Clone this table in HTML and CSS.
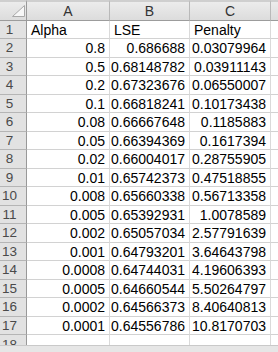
FILE: index.html
```html
<!DOCTYPE html>
<html>
<head>
<meta charset="utf-8">
<link rel="stylesheet" href="styles.css">
</head>
<body>
<div class="sheet">
  <div class="corner"><svg class="tri" width="14" height="12" viewBox="0 0 14 12"><polygon points="12.5,0.5 12.5,11.5 0.5,11.5" fill="#f7f7f7" stroke="#a8a8a8" stroke-width="1"/></svg></div>
  <div class="colh">A</div><div class="colh">B</div><div class="colh">C</div><div class="colh last"></div>

  <div class="rowh">1</div><div class="cell txt">Alpha</div><div class="cell txt">LSE</div><div class="cell txt">Penalty</div><div class="cell last"></div>
  <div class="rowh">2</div><div class="cell">0.8</div><div class="cell">0.686688</div><div class="cell">0.03079964</div><div class="cell last"></div>
  <div class="rowh">3</div><div class="cell">0.5</div><div class="cell">0.68148782</div><div class="cell">0.03911143</div><div class="cell last"></div>
  <div class="rowh">4</div><div class="cell">0.2</div><div class="cell">0.67323676</div><div class="cell">0.06550007</div><div class="cell last"></div>
  <div class="rowh">5</div><div class="cell">0.1</div><div class="cell">0.66818241</div><div class="cell">0.10173438</div><div class="cell last"></div>
  <div class="rowh">6</div><div class="cell">0.08</div><div class="cell">0.66667648</div><div class="cell">0.1185883</div><div class="cell last"></div>
  <div class="rowh">7</div><div class="cell">0.05</div><div class="cell">0.66394369</div><div class="cell">0.1617394</div><div class="cell last"></div>
  <div class="rowh">8</div><div class="cell">0.02</div><div class="cell">0.66004017</div><div class="cell">0.28755905</div><div class="cell last"></div>
  <div class="rowh">9</div><div class="cell">0.01</div><div class="cell">0.65742373</div><div class="cell">0.47518855</div><div class="cell last"></div>
  <div class="rowh">10</div><div class="cell">0.008</div><div class="cell">0.65660338</div><div class="cell">0.56713358</div><div class="cell last"></div>
  <div class="rowh">11</div><div class="cell">0.005</div><div class="cell">0.65392931</div><div class="cell">1.0078589</div><div class="cell last"></div>
  <div class="rowh">12</div><div class="cell">0.002</div><div class="cell">0.65057034</div><div class="cell">2.57791639</div><div class="cell last"></div>
  <div class="rowh">13</div><div class="cell">0.001</div><div class="cell">0.64793201</div><div class="cell">3.64643798</div><div class="cell last"></div>
  <div class="rowh">14</div><div class="cell">0.0008</div><div class="cell">0.64744031</div><div class="cell">4.19606393</div><div class="cell last"></div>
  <div class="rowh">15</div><div class="cell">0.0005</div><div class="cell">0.64660544</div><div class="cell">5.50264797</div><div class="cell last"></div>
  <div class="rowh">16</div><div class="cell">0.0002</div><div class="cell">0.64566373</div><div class="cell">8.40640813</div><div class="cell last"></div>
  <div class="rowh">17</div><div class="cell">0.0001</div><div class="cell">0.64556786</div><div class="cell">10.8170703</div><div class="cell last"></div>
  <div class="rowh cut">18</div><div class="cell cutc"></div><div class="cell cutc"></div><div class="cell cutc"></div><div class="cell last cutc"></div>
  <div class="bar"></div>
</div>
</body>
</html>
```
FILE: styles.css
```css
html, body {
  margin: 0;
  padding: 0;
  background: #ffffff;
  overflow: hidden;
}
.sheet {
  width: 278px;
  height: 352px;
  display: grid;
  grid-template-columns: 27px 83px 80px 81px 1fr;
  grid-template-rows: 21px repeat(17, 18.47px) 10px 1fr;
  font-family: "Liberation Sans", Arial, sans-serif;
  overflow: hidden;
}
.corner, .colh {
  box-sizing: border-box;
  background: linear-gradient(#ececec, #dcdcdc);
  border-top: 2px solid #cfcfcf;
  border-bottom: 1px solid #9c9c9c;
  border-right: 1px solid #b9b9b9;
}
.corner {
  position: relative;
  border-right: 1px solid #999999;
}
.tri {
  position: absolute;
  right: 0;
  bottom: 3px;
}
.colh {
  font-size: 14px;
  color: #333333;
  text-align: center;
  line-height: 18px;
}
.colh.last {
  border-right: none;
}
.rowh {
  box-sizing: border-box;
  background: #e2e2e2;
  border-right: 1px solid #999999;
  border-bottom: 1px solid #b5b5b5;
  font-size: 13.5px;
  color: #4a4a4a;
  text-align: center;
  padding-right: 7px;
  line-height: 18px;
  overflow: hidden;
}
.rowh.cut {
  border-bottom: none;
  line-height: 20px;
}
.cell {
  box-sizing: border-box;
  border-right: 1px solid #dadada;
  border-bottom: 1px solid #d2d2d2;
  font-size: 14px;
  color: #000000;
  text-align: right;
  padding-right: 4px;
  line-height: 18px;
  white-space: nowrap;
}
.cell.txt {
  text-align: left;
  padding-left: 4px;
  padding-right: 0;
}
.cell.last {
  border-right: none;
}
.cell.cutc {
  border-bottom: none;
}
.bar {
  grid-column: 1 / -1;
  background: #e6e6e6;
  border-top: 1px solid #c9c9c9;
}
```
